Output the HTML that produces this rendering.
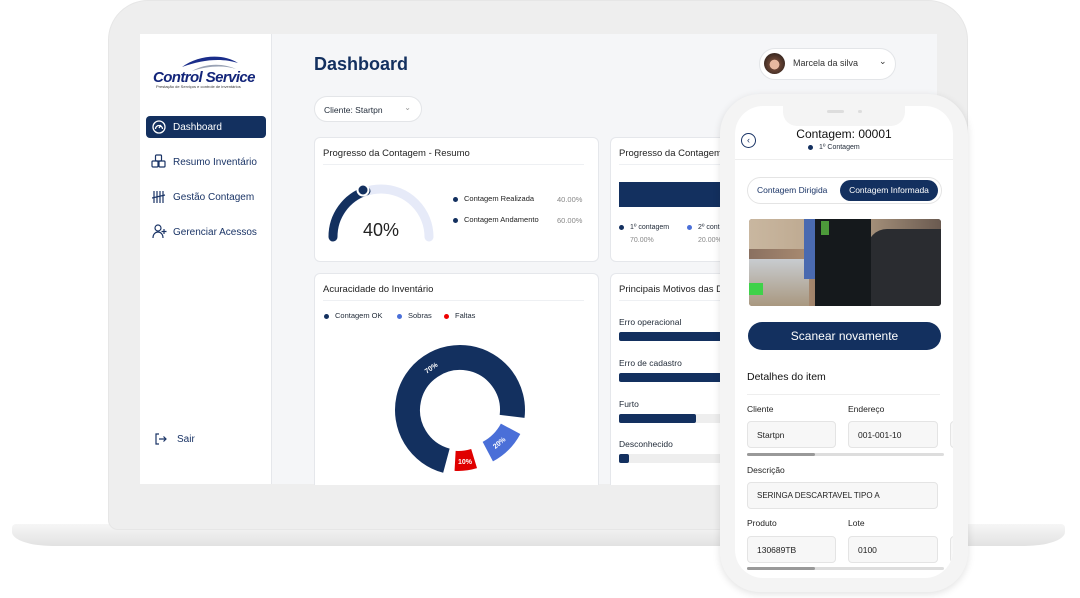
<!DOCTYPE html>
<html><head><meta charset="utf-8"><style>
*{margin:0;padding:0;box-sizing:border-box}
body{width:1080px;height:598px;background:#fff;position:relative;overflow:hidden;font-family:"Liberation Sans",sans-serif;color:#1f2937}
.a{position:absolute}
.card{position:absolute;background:#fff;border:1px solid #e5e7eb;border-radius:6px}
.ct{position:absolute;left:8px;top:10px;font-size:9.5px;color:#222;white-space:nowrap}
.hr{position:absolute;left:8px;right:14px;top:26px;height:1px;background:#eef0f3}
.nav{position:absolute;left:173px;font-size:10px;color:#1a3466}
.dot{display:inline-block;width:5px;height:5px;border-radius:50%;background:#13305f;margin-right:6px;vertical-align:middle}
.lbl{font-size:9px;color:#222}
.inp{position:absolute;background:#f7f7f7;border:1px solid #e4e4e4;border-radius:4px;font-size:8.5px;color:#222;padding-left:9px;display:flex;align-items:center}
</style></head><body>
<!-- laptop base -->
<div class="a" style="left:12px;top:524px;width:1053px;height:22px;background:linear-gradient(#f6f6f6,#e2e2e2);border-radius:4px 4px 40px 40px/4px 4px 14px 14px"></div>
<!-- bezel -->
<div class="a" style="left:108px;top:0;width:860px;height:530px;background:#eeeeee;border-radius:40px 40px 10px 10px;border:1px solid #e6e6e6"></div>
<!-- screen -->
<div class="a" style="left:140px;top:34px;width:797px;height:450px;background:#f5f6f8;overflow:hidden">
  <div class="a" style="left:0;top:0;width:132px;height:450px;background:#fff;border-right:1px solid #e5e7eb"></div>
</div>
<!-- logo -->
<svg class="a" style="left:178px;top:53px" width="62" height="22" viewBox="0 0 62 22"><path d="M4 14 C20 2 45 0 60 10 C45 5 25 6 4 14Z" fill="#1a2d8a"/><path d="M14 18 C28 10 45 10 58 16 C45 12 30 13 14 18Z" fill="#9aa3b5"/></svg>
<div class="a" style="left:153px;top:69px;font-size:15px;font-weight:bold;font-style:italic;color:#13257a;letter-spacing:-0.6px">Control Service</div>
<div class="a" style="left:156px;top:84px;font-size:4px;color:#333">Prestação de Serviços e controle de inventários</div>
<!-- nav -->
<div class="a" style="left:146px;top:116px;width:120px;height:22px;background:#13305f;border-radius:4px"></div>
<svg class="a" style="left:152px;top:120px" width="14" height="14" viewBox="0 0 14 14" fill="none" stroke="#fff" stroke-width="1.3"><circle cx="7" cy="7" r="6"/><path d="M3.5 9a3.5 3.5 0 1 1 7 0M7 8l2-3"/></svg>
<div class="nav" style="top:122px;color:#fff">Dashboard</div>
<svg class="a" style="left:151px;top:154px" width="15" height="15" viewBox="0 0 15 15" fill="none" stroke="#1a3466" stroke-width="1.2"><rect x="4.5" y="1" width="6" height="6" rx="1"/><rect x="1" y="7" width="6" height="6" rx="1"/><rect x="8" y="7" width="6" height="6" rx="1"/></svg>
<div class="nav" style="top:157px">Resumo Inventário</div>
<svg class="a" style="left:152px;top:190px" width="14" height="14" viewBox="0 0 14 14" fill="none" stroke="#1a3466" stroke-width="1.2"><path d="M2 1v12M5 1v12M8 1v12M11 1v12M0 8l13-3"/></svg>
<div class="nav" style="top:192px">Gestão Contagem</div>
<svg class="a" style="left:152px;top:224px" width="16" height="15" viewBox="0 0 16 15" fill="none" stroke="#1a3466" stroke-width="1.2"><circle cx="6" cy="4" r="3"/><path d="M1 14c0-4 2.5-6 5-6s5 2 5 6M12 5v5M9.5 7.5h5"/></svg>
<div class="nav" style="top:227px">Gerenciar Acessos</div>
<svg class="a" style="left:155px;top:433px" width="12" height="12" viewBox="0 0 12 12" fill="none" stroke="#1a3466" stroke-width="1.2"><path d="M4 1H1v10h3M4 6h7M8.5 3.5 11 6 8.5 8.5"/></svg>
<div class="nav" style="left:177px;top:434px">Sair</div>
<!-- header -->
<div class="a" style="left:314px;top:54px;font-size:18px;font-weight:bold;color:#13305f">Dashboard</div>
<div class="a" style="left:314px;top:96px;width:108px;height:26px;background:#fff;border:1px solid #e3e5e8;border-radius:13px;font-size:8.5px;padding:8px 0 0 9px">Cliente: Startpn<span style="position:absolute;right:10px;top:6px;color:#999;font-size:8px">⌄</span></div>
<div class="a" style="left:759px;top:48px;width:137px;height:32px;background:#fff;border:1px solid #e3e5e8;border-radius:16px"></div>
<div class="a" style="left:764px;top:53px;width:21px;height:21px;border-radius:50%;background:radial-gradient(circle at 50% 55%,#e8b9a0 30%,#6b4636 32%,#3d2a22 70%)"></div>
<div class="a" style="left:793px;top:58px;font-size:9px;color:#333">Marcela da silva</div>
<div class="a" style="left:879px;top:56px;font-size:9px;color:#333">⌄</div>
<!-- card 1 -->
<div class="card" style="left:314px;top:137px;width:285px;height:125px">
 <div class="ct">Progresso da Contagem - Resumo</div><div class="hr"></div>
 <div class="a lbl" style="left:138px;top:56px;font-size:7.5px"><span class="dot"></span>Contagem Realizada</div>
 <div class="a" style="left:242px;top:57px;font-size:7.5px;color:#888">40.00%</div>
 <div class="a lbl" style="left:138px;top:77px;font-size:7.5px"><span class="dot"></span>Contagem Andamento</div>
 <div class="a" style="left:242px;top:78px;font-size:7.5px;color:#888">60.00%</div>
</div>
<svg class="a" style="left:314px;top:137px" width="140" height="125"><path d="M19 100 A48 48 0 0 1 115 100" fill="none" stroke="#e6eaf8" stroke-width="9" stroke-linecap="round"/><path d="M19 100 A48 48 0 0 1 52 54" fill="none" stroke="#13305f" stroke-width="9" stroke-linecap="round"/><circle cx="49" cy="53" r="5.5" fill="#13305f" stroke="#fff" stroke-width="2"/><text x="67" y="99" text-anchor="middle" font-size="18" font-family="Liberation Sans" fill="#222">40%</text></svg>
<!-- card 2 -->
<div class="card" style="left:610px;top:137px;width:140px;height:125px;overflow:hidden">
 <div class="ct">Progresso da Contagem</div><div class="hr"></div>
 <div class="a" style="left:8px;top:44px;width:140px;height:25px;background:#13305f"></div>
 <div class="a" style="left:8px;top:86px;font-size:7px"><span class="dot"></span>1º contagem</div>
 <div class="a" style="left:19px;top:99px;font-size:7px;color:#888">70.00%</div>
 <div class="a" style="left:76px;top:86px;font-size:7px"><span class="dot" style="background:#4a6fd8"></span>2º contagem</div>
 <div class="a" style="left:87px;top:99px;font-size:7px;color:#888">20.00%</div>
</div>
<!-- card 3 -->
<div class="card" style="left:314px;top:273px;width:285px;height:212px;border-bottom:none;border-radius:6px 6px 0 0">
 <div class="ct">Acuracidade do Inventário</div><div class="hr"></div>
 <div class="a" style="left:9px;top:37px;font-size:7.5px"><span class="dot"></span>Contagem OK</div>
 <div class="a" style="left:82px;top:37px;font-size:7.5px"><span class="dot" style="background:#4a6fd8"></span>Sobras</div>
 <div class="a" style="left:129px;top:37px;font-size:7.5px"><span class="dot" style="background:#e00"></span>Faltas</div>
</div>
<svg class="a" style="left:380px;top:330px" width="160" height="154" viewBox="380 330 160 154"><path d="M446.4 460.7 A52.5 52.5 0 1 1 512.1 416.4" fill="none" stroke="#13305f" stroke-width="25"/><path d="M510.6 428.8 A55 55 0 0 1 487.8 451.6" fill="none" stroke="#4a6fd8" stroke-width="22" stroke-linejoin="round"/><path d="M474.1 458.6 A55 55 0 0 1 455.1 460.9" fill="none" stroke="#e00000" stroke-width="20"/><text x="424" y="371" font-size="7" fill="#fff" font-weight="bold" transform="rotate(-35 430 368)">70%</text><text x="492" y="446" font-size="7" fill="#fff" font-weight="bold" transform="rotate(-40 498 443)">20%</text><text x="458" y="464" font-size="7" fill="#fff" font-weight="bold">10%</text></svg>
<!-- card 4 -->
<div class="card" style="left:610px;top:273px;width:140px;height:212px;overflow:hidden;border-bottom:none;border-radius:6px 6px 0 0">
 <div class="ct">Principais Motivos das Divergências</div><div class="hr"></div>
 <div class="a" style="left:8px;top:43px;font-size:8.5px">Erro operacional</div>
 <div class="a" style="left:8px;top:58px;width:140px;height:9px;background:#13305f;border-radius:2px"></div>
 <div class="a" style="left:8px;top:84px;font-size:8.5px">Erro de cadastro</div>
 <div class="a" style="left:8px;top:99px;width:140px;height:9px;background:#13305f;border-radius:2px"></div>
 <div class="a" style="left:8px;top:125px;font-size:8.5px">Furto</div>
 <div class="a" style="left:8px;top:140px;width:140px;height:9px;background:#eee"></div>
 <div class="a" style="left:8px;top:140px;width:77px;height:9px;background:#13305f;border-radius:2px"></div>
 <div class="a" style="left:8px;top:165px;font-size:8.5px">Desconhecido</div>
 <div class="a" style="left:8px;top:180px;width:140px;height:9px;background:#eee"></div>
 <div class="a" style="left:8px;top:180px;width:10px;height:9px;background:#13305f;border-radius:2px"></div>
</div>
<!-- phone -->
<div class="a" style="left:720px;top:94px;width:248px;height:498px;background:#f4f4f4;border-radius:40px;box-shadow:0 2px 8px rgba(0,0,0,.12)"></div>
<div class="a" style="left:735px;top:106px;width:218px;height:472px;background:#fff;border-radius:28px;overflow:hidden">
 <div class="a" style="left:48px;top:-2px;width:122px;height:22px;background:#f4f4f4;border-radius:0 0 14px 14px"></div>
 <div class="a" style="left:92px;top:4px;width:17px;height:3px;background:#ddd;border-radius:2px"></div>
 <div class="a" style="left:123px;top:4px;width:4px;height:3px;background:#ddd;border-radius:2px"></div>
 <div class="a" style="left:6px;top:27px;width:15px;height:15px;border:1px solid #1a3466;border-radius:50%;font-size:9px;color:#1a3466;text-align:center;line-height:13px">‹</div>
 <div class="a" style="left:0;width:218px;top:21px;text-align:center;font-size:12px;color:#111">Contagem: 00001</div>
 <div class="a" style="left:73px;top:38px;font-size:7px"><span class="dot"></span>1º Contagem</div>
 <div class="a" style="left:0;top:53px;width:218px;height:1px;background:#eee"></div>
 <div class="a" style="left:12px;top:71px;width:195px;height:27px;border:1px solid #e4e4e4;border-radius:14px"></div>
 <div class="a" style="left:22px;top:79px;font-size:8.5px;color:#1a3466">Contagem Dirigida</div>
 <div class="a" style="left:105px;top:74px;width:98px;height:21px;background:#13305f;border-radius:11px;color:#fff;font-size:8.5px;text-align:center;line-height:21px">Contagem Informada</div>
 <div class="a" style="left:14px;top:113px;width:192px;height:87px;border-radius:3px;overflow:hidden;background:linear-gradient(90deg,#8a7060 0%,#a88a70 30%,#6a5446 60%,#2a2a2e 80%,#3a3a40 100%)">
  <div class="a" style="left:0;top:0;width:192px;height:30px;background:linear-gradient(90deg,#c9b7a0,#b8a288 50%,#6a5a50)"></div>
  <div class="a" style="left:0;top:40px;width:60px;height:47px;background:linear-gradient(#c8ccd0,#a99880)"></div>
  <div class="a" style="left:55px;top:0;width:28px;height:60px;background:#4a6ab0"></div>
  <div class="a" style="left:118px;top:10px;width:74px;height:77px;background:#2a2c30;border-radius:20px 0 0 0"></div>
  <div class="a" style="left:66px;top:0;width:56px;height:87px;background:#15191c"></div>
  <div class="a" style="left:72px;top:2px;width:8px;height:14px;background:#4c9a3a"></div>
  <div class="a" style="left:0;top:64px;width:14px;height:12px;background:#3fd24a"></div>
 </div>
 <div class="a" style="left:13px;top:216px;width:193px;height:28px;background:#13305f;border-radius:14px;color:#fff;font-size:12px;text-align:center;line-height:28px">Scanear novamente</div>
 <div class="a" style="left:12px;top:265px;font-size:10.5px;color:#111">Detalhes do item</div>
 <div class="a" style="left:12px;top:288px;width:193px;height:1px;background:#eee"></div>
 <div class="a lbl" style="left:12px;top:298px;font-size:8.5px">Cliente</div>
 <div class="a lbl" style="left:113px;top:298px;font-size:8.5px">Endereço</div>
 <div class="inp" style="left:12px;top:315px;width:89px;height:27px">Startpn</div>
 <div class="inp" style="left:113px;top:315px;width:90px;height:27px">001-001-10</div>
 <div class="inp" style="left:215px;top:315px;width:20px;height:27px"></div>
 <div class="a" style="left:12px;top:347px;width:197px;height:3px;background:#ddd;border-radius:2px"></div>
 <div class="a" style="left:12px;top:347px;width:68px;height:3px;background:#999;border-radius:2px"></div>
 <div class="a lbl" style="left:12px;top:359px;font-size:8.5px">Descrição</div>
 <div class="inp" style="left:12px;top:376px;width:191px;height:27px;font-size:8px">SERINGA DESCARTAVEL TIPO A</div>
 <div class="a lbl" style="left:12px;top:412px;font-size:8.5px">Produto</div>
 <div class="a lbl" style="left:113px;top:412px;font-size:8.5px">Lote</div>
 <div class="inp" style="left:12px;top:430px;width:89px;height:27px">130689TB</div>
 <div class="inp" style="left:113px;top:430px;width:90px;height:27px">0100</div>
 <div class="inp" style="left:215px;top:430px;width:20px;height:27px"></div>
 <div class="a" style="left:12px;top:461px;width:197px;height:3px;background:#ddd;border-radius:2px"></div>
 <div class="a" style="left:12px;top:461px;width:68px;height:3px;background:#999;border-radius:2px"></div>
</div>
</body></html>
